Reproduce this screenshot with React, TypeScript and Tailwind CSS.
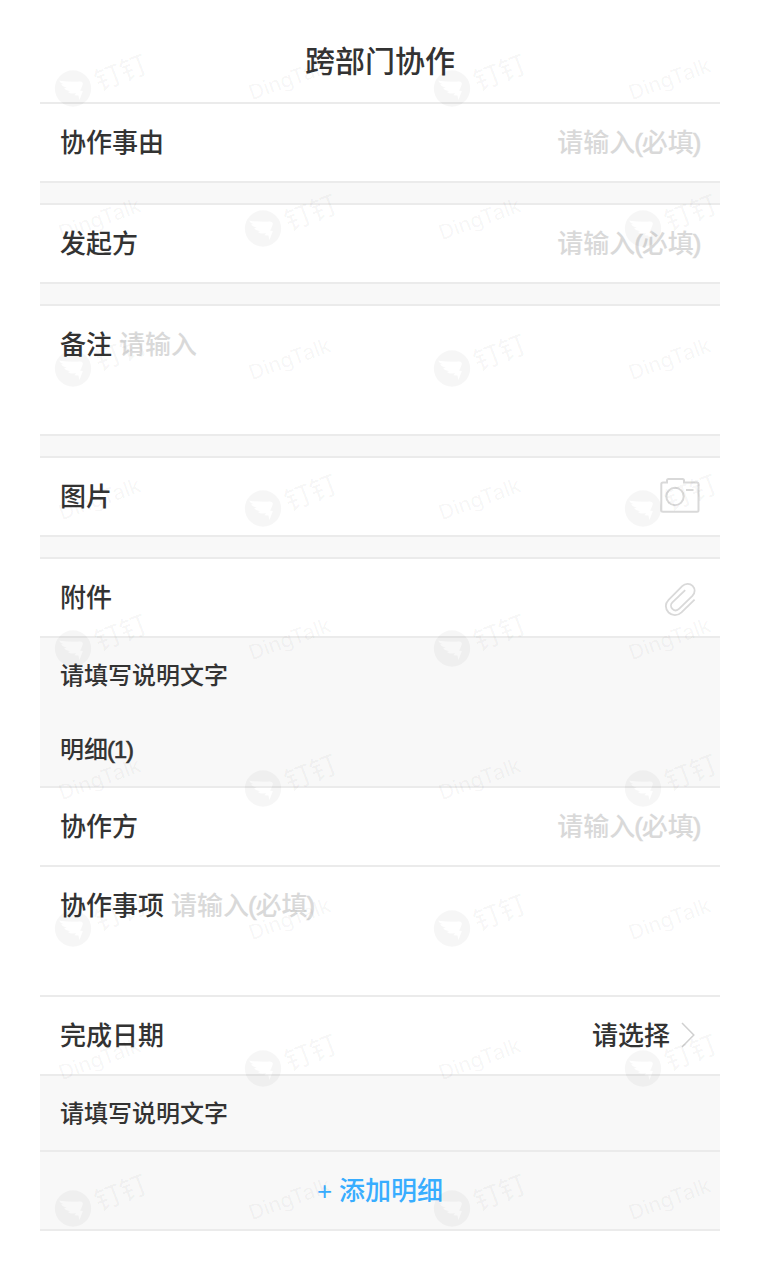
import type { ReactNode } from 'react'

const LOGOS = [0, 280, 560, 840, 1120].flatMap((y) => [
  { x: 73, y: y + 88.5 },
  { x: 452, y: y + 88.5 },
  { x: 263, y: y + 228.5 },
  { x: 643, y: y + 228.5 },
]).filter((p) => p.y < 1250)

const WORDS = [0, 280, 560, 840, 1120].flatMap((y) => [
  { x: 252, y: y + 100.5 },
  { x: 632, y: y + 100.5 },
  { x: 62, y: y + 240.5 },
  { x: 442, y: y + 240.5 },
]).filter((p) => p.y < 1250)

function Watermark() {
  return (
    <svg className="pointer-events-none absolute inset-0" width="760" height="1271" fill="#000" fillOpacity="0.036">
      {LOGOS.map((p) => (
        <g key={`${p.x}-${p.y}`} transform={`translate(${p.x} ${p.y})`}>
          <path
            fillRule="evenodd"
            d="M0-18.2a18.2 18.2 0 1 0 0 36.4a18.2 18.2 0 1 0 0-36.4zM-13.7-7.8Q-4-6.4 7-7Q10.4-6.6 9.6-4Q8.8-1 7 2.2L9.8 2.4L6.4 11.4L5.6 7L1.6 6.8L3 4.6Q-2 5.6-5 3.4L-2.6 2.6Q-7.4 2-8.8-.6L-6-.6Q-11-2-11.6-4.4L-9-4.2Q-12.6-5-13.7-7.8z"
          />
          <text
            transform="translate(26 3) rotate(-21)"
            className="font-['Noto_Sans_CJK_SC',sans-serif] text-[27px] font-medium"
          >
            钉钉
          </text>
        </g>
      ))}
      {WORDS.map((p) => (
        <text
          key={`${p.x}-${p.y}`}
          transform={`translate(${p.x} ${p.y}) rotate(-20)`}
          textLength="85.5"
          className="font-['Inter','Noto_Sans_CJK_SC',sans-serif] text-[21px] font-medium"
        >
          DingTalk
        </text>
      ))}
    </svg>
  )
}

// parentheses are set a little heavier and tighter than the latin face gives
function Paren({ children }: { children: string }) {
  return <span className="-ml-px tracking-[-1.3px] [-webkit-text-stroke:0.6px_currentColor]">{children}</span>
}

function Required() {
  return (
    <span className="text-[#d9d9d9]">
      请输入<Paren>(</Paren>必填<Paren>)</Paren>
    </span>
  )
}

function Row({ label, children }: { label: string; children: ReactNode }) {
  return (
    <div className="flex h-[79px] items-center justify-between border-t-2 border-[#ebebeb] px-5">
      <span>{label}</span>
      {children}
    </div>
  )
}

function TextArea({ label, children }: { label: string; children: ReactNode }) {
  return (
    <div className="h-[130px] border-t-2 border-[#ebebeb] px-5">
      <div className="flex h-[77px] items-center gap-[7px]">
        <span>{label}</span>
        {children}
      </div>
    </div>
  )
}

function Gap() {
  return <div className="h-[22px] border-t-2 border-[#ebebeb] bg-[#f8f8f8]" />
}

function CameraIcon() {
  return (
    <svg className="mb-1" width="40" height="36" viewBox="0 0 40 36" fill="none" stroke="#d9d9d9" strokeWidth="2">
      <path d="M3 5.5H7V3.5Q7 2 8.5 2H22.5Q24 2 24 3.5V5.5H37Q38.5 5.5 38.5 7V33.2Q38.5 34.7 37 34.7H3Q1.3 34.7 1.3 33.2V7Q1.3 5.5 3 5.5Z" />
      <circle cx="15" cy="19.5" r="8.7" />
      <path d="M26 13H33.5" />
    </svg>
  )
}

function ClipIcon() {
  return (
    <svg className="mr-1 mt-0.5" width="32" height="36" viewBox="0 0 32 36" fill="none" stroke="#d9d9d9" strokeWidth="1.8">
      <path d="M30.6 18.6L17.5 31.3C13.5 35 8.3 35 4.6 31.5C.9 27.7.9 22.5 4.6 18.8L18.2 5.2C21.3 2.1 25.8 2 28.6 4.8C31.4 7.7 31.3 12 28.4 14.9L15.3 27.7C13.2 29.7 10.4 29.8 8.4 27.9C6.5 26 6.5 23.2 8.4 21.3L21.2 9.2" />
    </svg>
  )
}

export default function App() {
  return (
    <div className="relative h-[1271px] w-[760px] overflow-hidden bg-white px-10 font-['Liberation_Sans','Noto_Sans_CJK_SC',sans-serif] text-[26px] leading-none font-medium text-[#333]">
      <h1 className="flex h-[102px] items-center justify-center pt-[21px] text-[30px] font-medium">跨部门协作</h1>

      <Row label="协作事由"><Required /></Row>
      <Gap />
      <Row label="发起方"><Required /></Row>
      <Gap />
      <TextArea label="备注"><span className="text-[#d9d9d9]">请输入</span></TextArea>
      <Gap />
      <Row label="图片"><CameraIcon /></Row>
      <Gap />
      <Row label="附件"><ClipIcon /></Row>

      <div className="border-t-2 border-[#ebebeb] bg-[#f8f8f8] px-5 text-2xl leading-none">
        <p className="flex h-[74px] items-center pt-0.5">请填写说明文字</p>
        <p className="flex h-[74px] items-center pt-0.5">
          明细<Paren>(</Paren>
          <span className="[-webkit-text-stroke:0.6px_currentColor]">1</span>
          <Paren>)</Paren>
        </p>
      </div>

      <Row label="协作方"><Required /></Row>
      <TextArea label="协作事项"><Required /></TextArea>
      <Row label="完成日期">
        <span className="flex items-center gap-[11px]">
          请选择
          <svg className="mr-1 mb-0.5" width="15" height="26" viewBox="0 0 15 26" fill="none" stroke="#d0d0d0" strokeWidth="1.5">
            <path d="M1 1L12.8 13L1 25" />
          </svg>
        </span>
      </Row>

      <p className="flex h-[76px] items-center border-t-2 border-[#ebebeb] bg-[#f8f8f8] px-5 pt-0.5 text-2xl leading-none">
        请填写说明文字
      </p>
      <button className="flex h-[81px] w-full items-center justify-center border-y-2 border-[#ebebeb] bg-[#f8f8f8] text-[#38adff]">
        <span className="[word-spacing:-0.5px]">+ 添加明细</span>
      </button>

      <Watermark />
    </div>
  )
}
